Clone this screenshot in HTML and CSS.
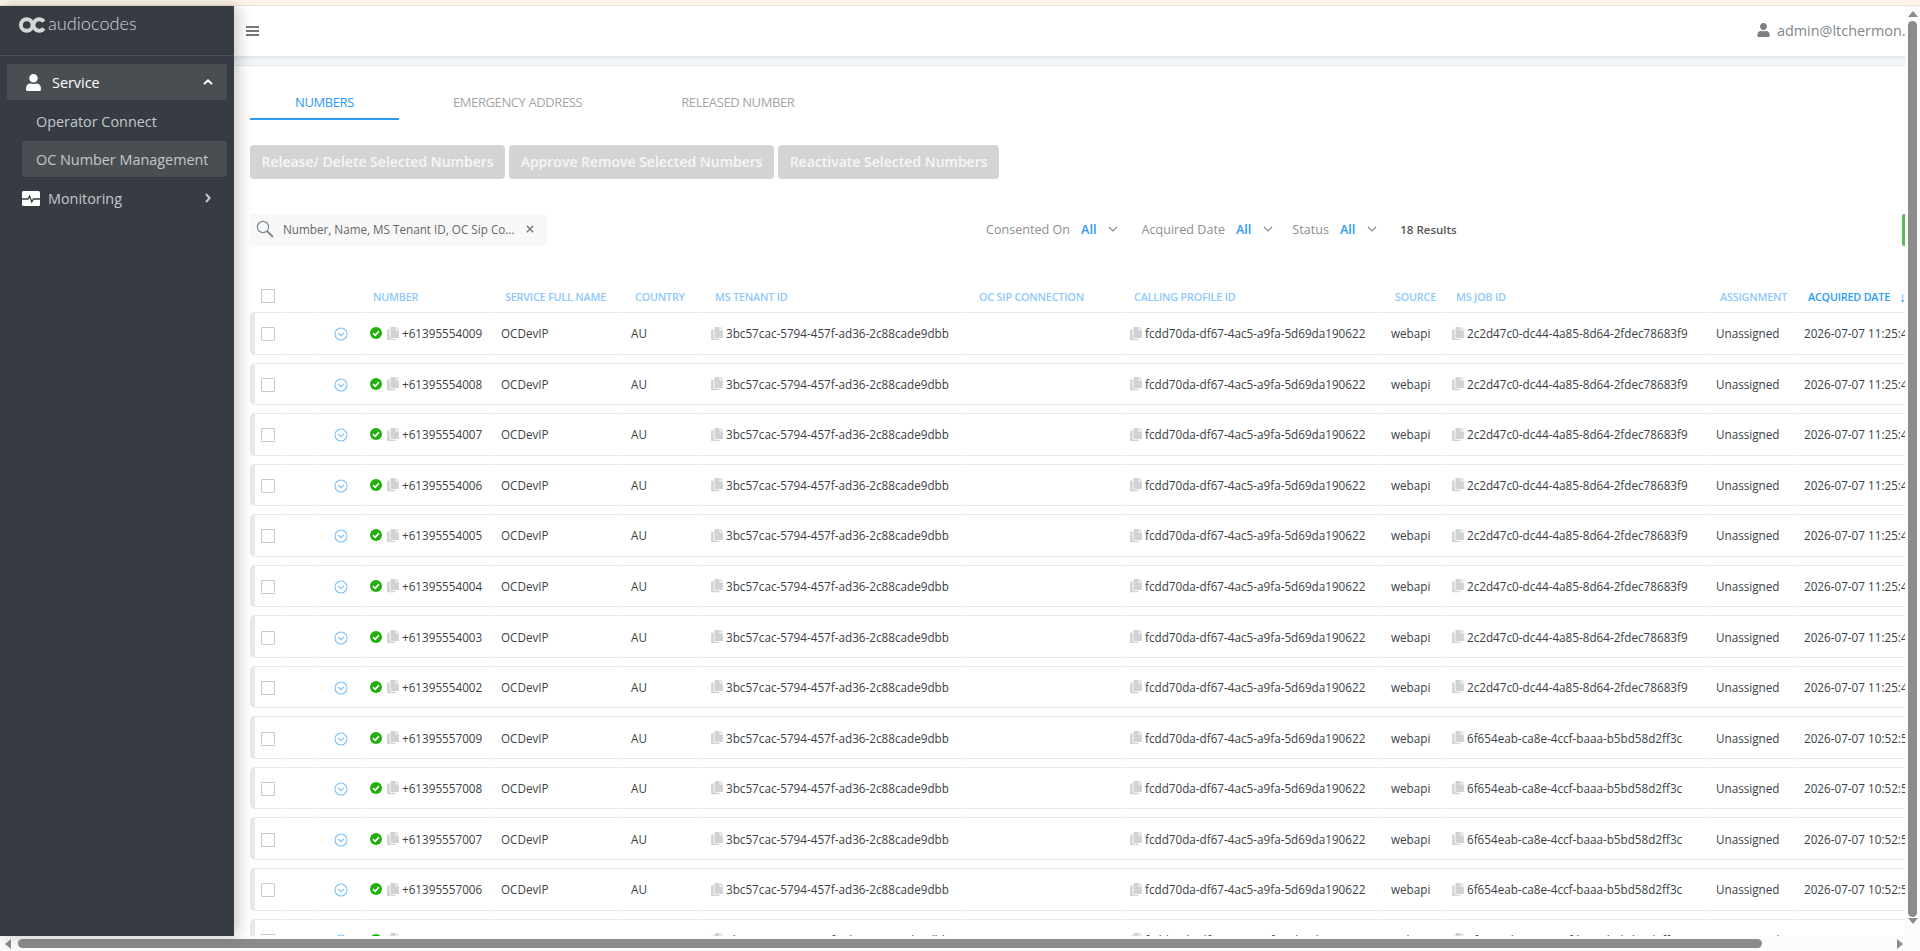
FILE: index.html
```html
<!DOCTYPE html>
<html lang="en">
<head>
    <meta charset="UTF-8">
    <meta name="viewport" content="width=device-width, initial-scale=1.0">
    <title>OC Number Management</title>
    <link rel="stylesheet" href="styles.css">
</head>
<body>
    <!-- Shared icons -->
    <svg class="icon-defs" aria-hidden="true">
        <symbol id="i-user" viewBox="0 0 448 512"><path d="M224 256c70.7 0 128-57.3 128-128S294.7 0 224 0 96 57.3 96 128s57.3 128 128 128zm89.6 32h-16.7c-22.2 10.2-46.9 16-72.9 16s-50.6-5.8-72.9-16h-16.7C60.2 288 0 348.2 0 422.4V464c0 26.5 21.5 48 48 48h352c26.5 0 48-21.5 48-48v-41.6c0-74.2-60.2-134.4-134.4-134.4z"/></symbol>
        <symbol id="i-copy" viewBox="0 0 448 512"><path d="M320 448v40c0 13.255-10.745 24-24 24H24c-13.255 0-24-10.745-24-24V120c0-13.255 10.745-24 24-24h72v296c0 30.879 25.121 56 56 56h168zm0-344V0H152c-13.255 0-24 10.745-24 24v368c0 13.255 10.745 24 24 24h272c13.255 0 24-10.745 24-24V128H344c-13.2 0-24-10.8-24-24zm120.971-31.029L375.029 7.029A24 24 0 0 0 358.059 0H352v96h96v-6.059a24 24 0 0 0-7.029-16.97z"/></symbol>
        <symbol id="i-ok" viewBox="0 0 12 12"><circle cx="6" cy="6" r="6" fill="#1fb00a"/><path d="M3 6.2l2.2 2.1L9 4.1" fill="none" stroke="#fff" stroke-width="1.7"/></symbol>
        <symbol id="i-expand" viewBox="0 0 14 14"><circle cx="7" cy="7" r="6" fill="none" stroke="#7fc1fb" stroke-width="1.1"/><path d="M4.2 6l2.8 2.7L9.8 6" fill="none" stroke="#7fc1fb" stroke-width="1.1"/></symbol>
        <symbol id="i-down" viewBox="0 0 10 6"><path d="M1 1l4 4 4-4" fill="none" stroke="#7d8a94" stroke-width="1.1"/></symbol>
    </svg>

    <div class="notice-strip"></div>

    <div class="shell">
        <aside class="sidebar">
            <div class="logo">
                <svg class="logo-mark" viewBox="0 0 28 16"><circle cx="8" cy="8" r="6" fill="none" stroke="#d6d7d9" stroke-width="4"/><path d="M25.8 4.4A6 6 0 1 0 25.8 11.6" fill="none" stroke="#d6d7d9" stroke-width="4"/></svg>
                <span class="logo-text">audiocodes</span>
            </div>
            <nav class="side-nav">
                <a class="side-item side-open">
                    <svg class="side-icon"><use href="#i-user"/></svg>
                    <span>Service</span>
                    <svg class="side-caret" viewBox="0 0 10 6"><path d="M1 5l4-3.6L9 5" fill="none" stroke="#fff" stroke-width="2"/></svg>
                </a>
                <a class="side-sub">Operator Connect</a>
                <a class="side-sub side-current">OC Number Management</a>
                <a class="side-item side-monitor">
                    <svg class="monitor-icon" viewBox="0 0 18 15"><rect width="18" height="15" rx="1.5" fill="#fff"/><path d="M0 8h6l1.6-3 2.2 6 1.6-3H18" fill="none" stroke="#363b44" stroke-width="1.3"/></svg>
                    <span>Monitoring</span>
                    <svg class="side-caret side-caret-right" viewBox="0 0 6 10"><path d="M1 1l3.6 4L1 9" fill="none" stroke="#c4c7ca" stroke-width="2"/></svg>
                </a>
            </nav>
        </aside>

        <main class="main">
            <header class="topbar">
                <div class="burger"><span></span><span></span><span></span></div>
                <div class="user-menu">
                    <svg class="user-icon"><use href="#i-user"/></svg>
                    <span>admin@ltchermon.onmicrosoft.com</span>
                </div>
            </header>
            <div class="topbar-gap"></div>

            <section class="content">
                <ul class="tabs">
                    <li class="tab tab-active">NUMBERS</li>
                    <li class="tab">EMERGENCY ADDRESS</li>
                    <li class="tab">RELEASED NUMBER</li>
                </ul>

                <div class="actions">
                    <button class="action-btn">Release/ Delete Selected Numbers</button>
                    <button class="action-btn">Approve Remove Selected Numbers</button>
                    <button class="action-btn">Reactivate Selected Numbers</button>
                </div>

                <div class="filters">
                    <div class="search">
                        <svg class="search-icon" viewBox="0 0 18 18"><circle cx="7" cy="7" r="5.6" fill="none" stroke="#7f8a93" stroke-width="1.2"/><path d="M11 11l6 6" stroke="#7f8a93" stroke-width="1.8"/></svg>
                        <span class="search-text">Number, Name, MS Tenant ID, OC Sip Co...</span>
                        <svg class="search-clear" viewBox="0 0 8 8"><path d="M.8.8l6.4 6.4M7.2.8L.8 7.2" stroke="#77797c" stroke-width="1.4"/></svg>
                    </div>
                    <div class="filter filter-first"><span>Consented On</span><b>All</b><svg class="filter-caret"><use href="#i-down"/></svg></div>
                    <div class="filter filter-date"><span>Acquired Date</span><b>All</b><svg class="filter-caret"><use href="#i-down"/></svg></div>
                    <div class="filter filter-status"><span>Status</span><b>All</b><svg class="filter-caret"><use href="#i-down"/></svg></div>
                    <div class="results">18 Results</div>
                    <div class="green-btn"></div>
                </div>

                <div class="grid">
                    <div class="row head-row">
                        <div class="cell"><span class="checkbox"></span></div>
                        <div class="cell"></div>
                        <div class="cell"></div>
                        <div class="cell">NUMBER</div>
                        <div class="cell">SERVICE FULL NAME</div>
                        <div class="cell">COUNTRY</div>
                        <div class="cell">MS TENANT ID</div>
                        <div class="cell">OC SIP CONNECTION</div>
                        <div class="cell">CALLING PROFILE ID</div>
                        <div class="cell">SOURCE</div>
                        <div class="cell">MS JOB ID</div>
                        <div class="cell">ASSIGNMENT</div>
                        <div class="cell head-sorted">ACQUIRED DATE <span class="sort-arrow">↓</span></div>
                    </div>

                    <div class="row data-row">
                        <div class="cell"><span class="checkbox"></span></div>
                        <div class="cell"></div>
                        <div class="cell"><svg class="expand"><use href="#i-expand"/></svg></div>
                        <div class="cell"><svg class="ok"><use href="#i-ok"/></svg><svg class="copy"><use href="#i-copy"/></svg>+61395554009</div>
                        <div class="cell">OCDevIP</div>
                        <div class="cell">AU</div>
                        <div class="cell"><svg class="copy"><use href="#i-copy"/></svg>3bc57cac-5794-457f-ad36-2c88cade9dbb</div>
                        <div class="cell"></div>
                        <div class="cell"><svg class="copy"><use href="#i-copy"/></svg>fcdd70da-df67-4ac5-a9fa-5d69da190622</div>
                        <div class="cell">webapi</div>
                        <div class="cell"><svg class="copy"><use href="#i-copy"/></svg>2c2d47c0-dc44-4a85-8d64-2fdec78683f9</div>
                        <div class="cell">Unassigned</div>
                        <div class="cell">2026-07-07 11:25:47</div>
                    </div>
                    <div class="row data-row">
                        <div class="cell"><span class="checkbox"></span></div>
                        <div class="cell"></div>
                        <div class="cell"><svg class="expand"><use href="#i-expand"/></svg></div>
                        <div class="cell"><svg class="ok"><use href="#i-ok"/></svg><svg class="copy"><use href="#i-copy"/></svg>+61395554008</div>
                        <div class="cell">OCDevIP</div>
                        <div class="cell">AU</div>
                        <div class="cell"><svg class="copy"><use href="#i-copy"/></svg>3bc57cac-5794-457f-ad36-2c88cade9dbb</div>
                        <div class="cell"></div>
                        <div class="cell"><svg class="copy"><use href="#i-copy"/></svg>fcdd70da-df67-4ac5-a9fa-5d69da190622</div>
                        <div class="cell">webapi</div>
                        <div class="cell"><svg class="copy"><use href="#i-copy"/></svg>2c2d47c0-dc44-4a85-8d64-2fdec78683f9</div>
                        <div class="cell">Unassigned</div>
                        <div class="cell">2026-07-07 11:25:47</div>
                    </div>
                    <div class="row data-row">
                        <div class="cell"><span class="checkbox"></span></div>
                        <div class="cell"></div>
                        <div class="cell"><svg class="expand"><use href="#i-expand"/></svg></div>
                        <div class="cell"><svg class="ok"><use href="#i-ok"/></svg><svg class="copy"><use href="#i-copy"/></svg>+61395554007</div>
                        <div class="cell">OCDevIP</div>
                        <div class="cell">AU</div>
                        <div class="cell"><svg class="copy"><use href="#i-copy"/></svg>3bc57cac-5794-457f-ad36-2c88cade9dbb</div>
                        <div class="cell"></div>
                        <div class="cell"><svg class="copy"><use href="#i-copy"/></svg>fcdd70da-df67-4ac5-a9fa-5d69da190622</div>
                        <div class="cell">webapi</div>
                        <div class="cell"><svg class="copy"><use href="#i-copy"/></svg>2c2d47c0-dc44-4a85-8d64-2fdec78683f9</div>
                        <div class="cell">Unassigned</div>
                        <div class="cell">2026-07-07 11:25:47</div>
                    </div>
                    <div class="row data-row">
                        <div class="cell"><span class="checkbox"></span></div>
                        <div class="cell"></div>
                        <div class="cell"><svg class="expand"><use href="#i-expand"/></svg></div>
                        <div class="cell"><svg class="ok"><use href="#i-ok"/></svg><svg class="copy"><use href="#i-copy"/></svg>+61395554006</div>
                        <div class="cell">OCDevIP</div>
                        <div class="cell">AU</div>
                        <div class="cell"><svg class="copy"><use href="#i-copy"/></svg>3bc57cac-5794-457f-ad36-2c88cade9dbb</div>
                        <div class="cell"></div>
                        <div class="cell"><svg class="copy"><use href="#i-copy"/></svg>fcdd70da-df67-4ac5-a9fa-5d69da190622</div>
                        <div class="cell">webapi</div>
                        <div class="cell"><svg class="copy"><use href="#i-copy"/></svg>2c2d47c0-dc44-4a85-8d64-2fdec78683f9</div>
                        <div class="cell">Unassigned</div>
                        <div class="cell">2026-07-07 11:25:47</div>
                    </div>
                    <div class="row data-row">
                        <div class="cell"><span class="checkbox"></span></div>
                        <div class="cell"></div>
                        <div class="cell"><svg class="expand"><use href="#i-expand"/></svg></div>
                        <div class="cell"><svg class="ok"><use href="#i-ok"/></svg><svg class="copy"><use href="#i-copy"/></svg>+61395554005</div>
                        <div class="cell">OCDevIP</div>
                        <div class="cell">AU</div>
                        <div class="cell"><svg class="copy"><use href="#i-copy"/></svg>3bc57cac-5794-457f-ad36-2c88cade9dbb</div>
                        <div class="cell"></div>
                        <div class="cell"><svg class="copy"><use href="#i-copy"/></svg>fcdd70da-df67-4ac5-a9fa-5d69da190622</div>
                        <div class="cell">webapi</div>
                        <div class="cell"><svg class="copy"><use href="#i-copy"/></svg>2c2d47c0-dc44-4a85-8d64-2fdec78683f9</div>
                        <div class="cell">Unassigned</div>
                        <div class="cell">2026-07-07 11:25:47</div>
                    </div>
                    <div class="row data-row">
                        <div class="cell"><span class="checkbox"></span></div>
                        <div class="cell"></div>
                        <div class="cell"><svg class="expand"><use href="#i-expand"/></svg></div>
                        <div class="cell"><svg class="ok"><use href="#i-ok"/></svg><svg class="copy"><use href="#i-copy"/></svg>+61395554004</div>
                        <div class="cell">OCDevIP</div>
                        <div class="cell">AU</div>
                        <div class="cell"><svg class="copy"><use href="#i-copy"/></svg>3bc57cac-5794-457f-ad36-2c88cade9dbb</div>
                        <div class="cell"></div>
                        <div class="cell"><svg class="copy"><use href="#i-copy"/></svg>fcdd70da-df67-4ac5-a9fa-5d69da190622</div>
                        <div class="cell">webapi</div>
                        <div class="cell"><svg class="copy"><use href="#i-copy"/></svg>2c2d47c0-dc44-4a85-8d64-2fdec78683f9</div>
                        <div class="cell">Unassigned</div>
                        <div class="cell">2026-07-07 11:25:47</div>
                    </div>
                    <div class="row data-row">
                        <div class="cell"><span class="checkbox"></span></div>
                        <div class="cell"></div>
                        <div class="cell"><svg class="expand"><use href="#i-expand"/></svg></div>
                        <div class="cell"><svg class="ok"><use href="#i-ok"/></svg><svg class="copy"><use href="#i-copy"/></svg>+61395554003</div>
                        <div class="cell">OCDevIP</div>
                        <div class="cell">AU</div>
                        <div class="cell"><svg class="copy"><use href="#i-copy"/></svg>3bc57cac-5794-457f-ad36-2c88cade9dbb</div>
                        <div class="cell"></div>
                        <div class="cell"><svg class="copy"><use href="#i-copy"/></svg>fcdd70da-df67-4ac5-a9fa-5d69da190622</div>
                        <div class="cell">webapi</div>
                        <div class="cell"><svg class="copy"><use href="#i-copy"/></svg>2c2d47c0-dc44-4a85-8d64-2fdec78683f9</div>
                        <div class="cell">Unassigned</div>
                        <div class="cell">2026-07-07 11:25:47</div>
                    </div>
                    <div class="row data-row">
                        <div class="cell"><span class="checkbox"></span></div>
                        <div class="cell"></div>
                        <div class="cell"><svg class="expand"><use href="#i-expand"/></svg></div>
                        <div class="cell"><svg class="ok"><use href="#i-ok"/></svg><svg class="copy"><use href="#i-copy"/></svg>+61395554002</div>
                        <div class="cell">OCDevIP</div>
                        <div class="cell">AU</div>
                        <div class="cell"><svg class="copy"><use href="#i-copy"/></svg>3bc57cac-5794-457f-ad36-2c88cade9dbb</div>
                        <div class="cell"></div>
                        <div class="cell"><svg class="copy"><use href="#i-copy"/></svg>fcdd70da-df67-4ac5-a9fa-5d69da190622</div>
                        <div class="cell">webapi</div>
                        <div class="cell"><svg class="copy"><use href="#i-copy"/></svg>2c2d47c0-dc44-4a85-8d64-2fdec78683f9</div>
                        <div class="cell">Unassigned</div>
                        <div class="cell">2026-07-07 11:25:47</div>
                    </div>
                    <div class="row data-row">
                        <div class="cell"><span class="checkbox"></span></div>
                        <div class="cell"></div>
                        <div class="cell"><svg class="expand"><use href="#i-expand"/></svg></div>
                        <div class="cell"><svg class="ok"><use href="#i-ok"/></svg><svg class="copy"><use href="#i-copy"/></svg>+61395557009</div>
                        <div class="cell">OCDevIP</div>
                        <div class="cell">AU</div>
                        <div class="cell"><svg class="copy"><use href="#i-copy"/></svg>3bc57cac-5794-457f-ad36-2c88cade9dbb</div>
                        <div class="cell"></div>
                        <div class="cell"><svg class="copy"><use href="#i-copy"/></svg>fcdd70da-df67-4ac5-a9fa-5d69da190622</div>
                        <div class="cell">webapi</div>
                        <div class="cell"><svg class="copy"><use href="#i-copy"/></svg>6f654eab-ca8e-4ccf-baaa-b5bd58d2ff3c</div>
                        <div class="cell">Unassigned</div>
                        <div class="cell">2026-07-07 10:52:55</div>
                    </div>
                    <div class="row data-row">
                        <div class="cell"><span class="checkbox"></span></div>
                        <div class="cell"></div>
                        <div class="cell"><svg class="expand"><use href="#i-expand"/></svg></div>
                        <div class="cell"><svg class="ok"><use href="#i-ok"/></svg><svg class="copy"><use href="#i-copy"/></svg>+61395557008</div>
                        <div class="cell">OCDevIP</div>
                        <div class="cell">AU</div>
                        <div class="cell"><svg class="copy"><use href="#i-copy"/></svg>3bc57cac-5794-457f-ad36-2c88cade9dbb</div>
                        <div class="cell"></div>
                        <div class="cell"><svg class="copy"><use href="#i-copy"/></svg>fcdd70da-df67-4ac5-a9fa-5d69da190622</div>
                        <div class="cell">webapi</div>
                        <div class="cell"><svg class="copy"><use href="#i-copy"/></svg>6f654eab-ca8e-4ccf-baaa-b5bd58d2ff3c</div>
                        <div class="cell">Unassigned</div>
                        <div class="cell">2026-07-07 10:52:55</div>
                    </div>
                    <div class="row data-row">
                        <div class="cell"><span class="checkbox"></span></div>
                        <div class="cell"></div>
                        <div class="cell"><svg class="expand"><use href="#i-expand"/></svg></div>
                        <div class="cell"><svg class="ok"><use href="#i-ok"/></svg><svg class="copy"><use href="#i-copy"/></svg>+61395557007</div>
                        <div class="cell">OCDevIP</div>
                        <div class="cell">AU</div>
                        <div class="cell"><svg class="copy"><use href="#i-copy"/></svg>3bc57cac-5794-457f-ad36-2c88cade9dbb</div>
                        <div class="cell"></div>
                        <div class="cell"><svg class="copy"><use href="#i-copy"/></svg>fcdd70da-df67-4ac5-a9fa-5d69da190622</div>
                        <div class="cell">webapi</div>
                        <div class="cell"><svg class="copy"><use href="#i-copy"/></svg>6f654eab-ca8e-4ccf-baaa-b5bd58d2ff3c</div>
                        <div class="cell">Unassigned</div>
                        <div class="cell">2026-07-07 10:52:55</div>
                    </div>
                    <div class="row data-row">
                        <div class="cell"><span class="checkbox"></span></div>
                        <div class="cell"></div>
                        <div class="cell"><svg class="expand"><use href="#i-expand"/></svg></div>
                        <div class="cell"><svg class="ok"><use href="#i-ok"/></svg><svg class="copy"><use href="#i-copy"/></svg>+61395557006</div>
                        <div class="cell">OCDevIP</div>
                        <div class="cell">AU</div>
                        <div class="cell"><svg class="copy"><use href="#i-copy"/></svg>3bc57cac-5794-457f-ad36-2c88cade9dbb</div>
                        <div class="cell"></div>
                        <div class="cell"><svg class="copy"><use href="#i-copy"/></svg>fcdd70da-df67-4ac5-a9fa-5d69da190622</div>
                        <div class="cell">webapi</div>
                        <div class="cell"><svg class="copy"><use href="#i-copy"/></svg>6f654eab-ca8e-4ccf-baaa-b5bd58d2ff3c</div>
                        <div class="cell">Unassigned</div>
                        <div class="cell">2026-07-07 10:52:55</div>
                    </div>
                    <div class="row data-row">
                        <div class="cell"><span class="checkbox"></span></div>
                        <div class="cell"></div>
                        <div class="cell"><svg class="expand"><use href="#i-expand"/></svg></div>
                        <div class="cell"><svg class="ok"><use href="#i-ok"/></svg><svg class="copy"><use href="#i-copy"/></svg>+61395557005</div>
                        <div class="cell">OCDevIP</div>
                        <div class="cell">AU</div>
                        <div class="cell"><svg class="copy"><use href="#i-copy"/></svg>3bc57cac-5794-457f-ad36-2c88cade9dbb</div>
                        <div class="cell"></div>
                        <div class="cell"><svg class="copy"><use href="#i-copy"/></svg>fcdd70da-df67-4ac5-a9fa-5d69da190622</div>
                        <div class="cell">webapi</div>
                        <div class="cell"><svg class="copy"><use href="#i-copy"/></svg>6f654eab-ca8e-4ccf-baaa-b5bd58d2ff3c</div>
                        <div class="cell">Unassigned</div>
                        <div class="cell">2026-07-07 10:52:55</div>
                    </div>
                </div>
            </section>
        </main>

        <div class="vscroll">
            <span class="arrow-up"></span>
            <span class="vscroll-thumb"></span>
            <span class="arrow-down"></span>
        </div>
    </div>

    <div class="hscroll">
        <span class="arrow-left"></span>
        <span class="hscroll-thumb"></span>
        <span class="arrow-right"></span>
    </div>
</body>
</html>
```

FILE: styles.css
```css
/* Base styles */
* {
    margin: 0;
    padding: 0;
    box-sizing: border-box;
    font-family: 'Open Sans', sans-serif;
}

html, body {
    height: 951px;
    overflow: hidden;
}

body {
    display: flex;
    flex-direction: column;
    background: #fff;
    color: #3b3f45;
}

.icon-defs {
    display: none;
}

.notice-strip {
    height: 6px;
    flex: none;
    background: #fdf5e9;
    border-bottom: 1px solid #f1e4d0;
}

.shell {
    flex: 1;
    min-height: 0;
    display: flex;
}

/* Sidebar */
.sidebar {
    width: 234px;
    flex: none;
    background: #363b44;
    box-shadow: 4px 0 14px rgba(0, 0, 0, 0.22);
    position: relative;
    z-index: 2;
}

.logo {
    height: 50px;
    padding: 4px 0 0 19px;
    display: flex;
    align-items: flex-start;
    border-bottom: 1px solid #4c5058;
}

.logo-mark {
    width: 27px;
    height: 16px;
    margin-top: 7px;
}

.logo-text {
    font-family: 'Lato', sans-serif;
    font-weight: 300;
    font-size: 18.2px;
    line-height: 24px;
    margin: 1px 0 0 2px;
    color: #d4d6d8;
}

.side-nav {
    padding: 8px 7px;
    display: flex;
    flex-direction: column;
    gap: 3px;
}

.side-item {
    height: 36px;
    display: flex;
    align-items: center;
    font-size: 14.4px;
    color: #c4c7ca;
}

.side-open {
    background: #494e53;
    border-radius: 3px;
    color: #fff;
    padding-left: 19px;
}

.side-icon {
    width: 15px;
    height: 17px;
    fill: #fff;
    margin-right: 11px;
}

.side-caret {
    width: 10px;
    height: 6px;
    margin-left: auto;
    margin-right: 14px;
}

.side-caret-right {
    width: 6px;
    height: 10px;
    margin-right: 16px;
}

.side-monitor {
    padding-left: 15px;
}

.monitor-icon {
    width: 18px;
    height: 15px;
    margin-right: 8px;
}

.side-sub {
    height: 35px;
    margin-left: 15px;
    padding: 1px 0 0 14px;
    display: flex;
    align-items: center;
    font-size: 14.4px;
    color: #c4c7ca;
}

.side-sub.side-current {
    height: 36px;
    padding-top: 0;
    background: #494e53;
    border-radius: 3px;
}

/* Top bar */
.main {
    flex: 1;
    min-width: 0;
    overflow: hidden;
    display: flex;
    flex-direction: column;
}

.topbar {
    height: 50px;
    flex: none;
    display: flex;
    align-items: center;
    justify-content: space-between;
    padding-left: 12px;
    overflow: hidden;
    white-space: nowrap;
    background: #fff;
}

.burger {
    width: 13px;
    display: flex;
    flex-direction: column;
    gap: 2px;
}

.burger span {
    height: 2px;
    background: #777;
}

.user-menu {
    width: 148px;
    flex: none;
    display: flex;
    align-items: center;
    padding-bottom: 2px;
    font-size: 14.4px;
    color: #7f868d;
}

.user-icon {
    width: 13px;
    height: 14px;
    fill: #7a7f85;
    margin-right: 7px;
    flex: none;
}

.topbar-gap {
    height: 10px;
    flex: none;
    background: linear-gradient(#e1e4e9, #f4f5f8 60%);
    border-bottom: 1px solid #e8e9ee;
}

/* Content */
.content {
    flex: 1;
    min-height: 0;
    padding-left: 16px;
    overflow: hidden;
}

.tabs {
    display: flex;
    list-style: none;
    height: 54px;
}

.tab {
    padding: 0 45px;
    margin-right: 9px;
    height: 54px;
    line-height: 73px;
    font-size: 13px;
    font-weight: 400;
    letter-spacing: -0.4px;
    color: #a5a5a5;
}

.tab-active {
    color: #2b9af3;
    border-bottom: 2px solid #2b9af3;
}

.actions {
    display: flex;
    gap: 4px;
    margin-top: 25px;
}

.action-btn {
    height: 34px;
    padding: 0 11.5px 2px;
    border: none;
    border-radius: 4px;
    background: #d4d4d4;
    color: #f6f6f6;
    font-size: 14px;
    font-weight: 600;
}

.filters {
    display: flex;
    align-items: center;
    height: 32px;
    margin-top: 35px;
    white-space: nowrap;
}

.search {
    width: 297px;
    height: 32px;
    flex: none;
    display: flex;
    align-items: center;
    padding: 0 0 2px 6px;
    background: #f8f8f8;
    border-radius: 4px;
    font-size: 11.7px;
    color: #666;
}

.search-icon {
    width: 18px;
    height: 18px;
    margin-right: 9px;
}

.search-text {
    width: 243px;
}

.search-clear {
    width: 8px;
    height: 8px;
}

.filter {
    display: flex;
    align-items: center;
    padding-bottom: 2px;
    font-size: 12.6px;
    color: #8e8e8e;
}

.filter b {
    font-weight: 600;
    color: #2b9af3;
    margin-left: 11px;
}

.filter-caret {
    width: 10px;
    height: 6px;
    margin-left: 12px;
}

.filter-first {
    margin-left: 439px;
}

.filter-date {
    margin-left: 23px;
}

.filter-status {
    margin-left: 19px;
}

.results {
    margin-left: 23px;
    padding-bottom: 2px;
    font-size: 11.5px;
    font-weight: 600;
    color: #555;
}

.green-btn {
    width: 3px;
    height: 32px;
    margin-left: 445px;
    background: #5cb85c;
    border-radius: 2px 0 0 2px;
}

/* Number table */
.grid {
    width: 1900px;
    margin-top: 33px;
}

.row {
    display: grid;
    grid-template-columns: 33px 34px 41px 131px 129px 79px 263px 154px 260px 60px 263px 87px 200px;
    column-gap: 1px;
    align-items: stretch;
    white-space: nowrap;
}

.cell {
    display: flex;
    align-items: center;
    min-width: 0;
    overflow: hidden;
}

.head-row {
    height: 33px;
}

.head-row .cell {
    padding: 1px 0 0 12px;
    font-size: 10.8px;
    font-weight: 600;
    letter-spacing: -0.2px;
    color: #8fc9fb;
}

.head-row .cell:first-child {
    padding-left: 11px;
}

.head-row .head-sorted {
    color: #2b9af3;
    overflow: visible;
}

.sort-arrow {
    margin-left: 9px;
    font-size: 14px;
    font-weight: 400;
}

.data-row {
    height: 42.55px;
    margin-bottom: 8px;
}

.data-row .cell {
    padding-left: 8px;
    font-size: 11.7px;
    color: #3b3f45;
    border-top: 1px solid #e8e8e8;
    border-bottom: 1px solid #e8e8e8;
}

.data-row .cell:first-child {
    padding-left: 6px;
    border-left: 5px solid #e8e8e8;
    border-radius: 5px 0 0 5px;
}

.data-row .cell:nth-child(3) {
    padding-left: 15px;
}

.data-row .cell:nth-child(4) {
    padding-left: 9px;
}

.checkbox {
    width: 14px;
    height: 14px;
    flex: none;
    border: 1px solid #c9c9c9;
    border-radius: 1px;
    background: #fff;
}

.data-row .checkbox {
    margin-top: 2px;
}

.expand {
    width: 14px;
    height: 14px;
    margin-top: 2px;
}

.ok {
    width: 12px;
    height: 12px;
    margin-right: 5px;
}

.copy {
    width: 12px;
    height: 13.5px;
    flex: none;
    fill: #d2d2d2;
    margin-right: 3px;
}

/* Page scrollbars */
.vscroll {
    width: 15px;
    flex: none;
    display: flex;
    flex-direction: column;
    align-items: center;
    background: #fbfbfb;
    padding-top: 5px;
}

.vscroll-thumb {
    width: 9px;
    height: 896px;
    margin-top: 4px;
    background: #8b8b8b;
    border-radius: 5px;
}

.arrow-up {
    border-left: 5px solid transparent;
    border-right: 5px solid transparent;
    border-bottom: 6px solid #8b8b8b;
}

.arrow-down {
    margin-top: 1px;
    border-left: 5px solid transparent;
    border-right: 5px solid transparent;
    border-top: 6px solid #8b8b8b;
}

.hscroll {
    height: 15px;
    flex: none;
    display: flex;
    align-items: center;
    background: #fbfbfb;
    padding-left: 5px;
}

.hscroll-thumb {
    width: 1744px;
    height: 9px;
    margin-left: 7px;
    background: #8b8b8b;
    border-radius: 5px;
}

.arrow-left {
    border-top: 5px solid transparent;
    border-bottom: 5px solid transparent;
    border-right: 6px solid #8b8b8b;
}

.arrow-right {
    margin-left: 135px;
    border-top: 5px solid transparent;
    border-bottom: 5px solid transparent;
    border-left: 6px solid #8b8b8b;
}
```
